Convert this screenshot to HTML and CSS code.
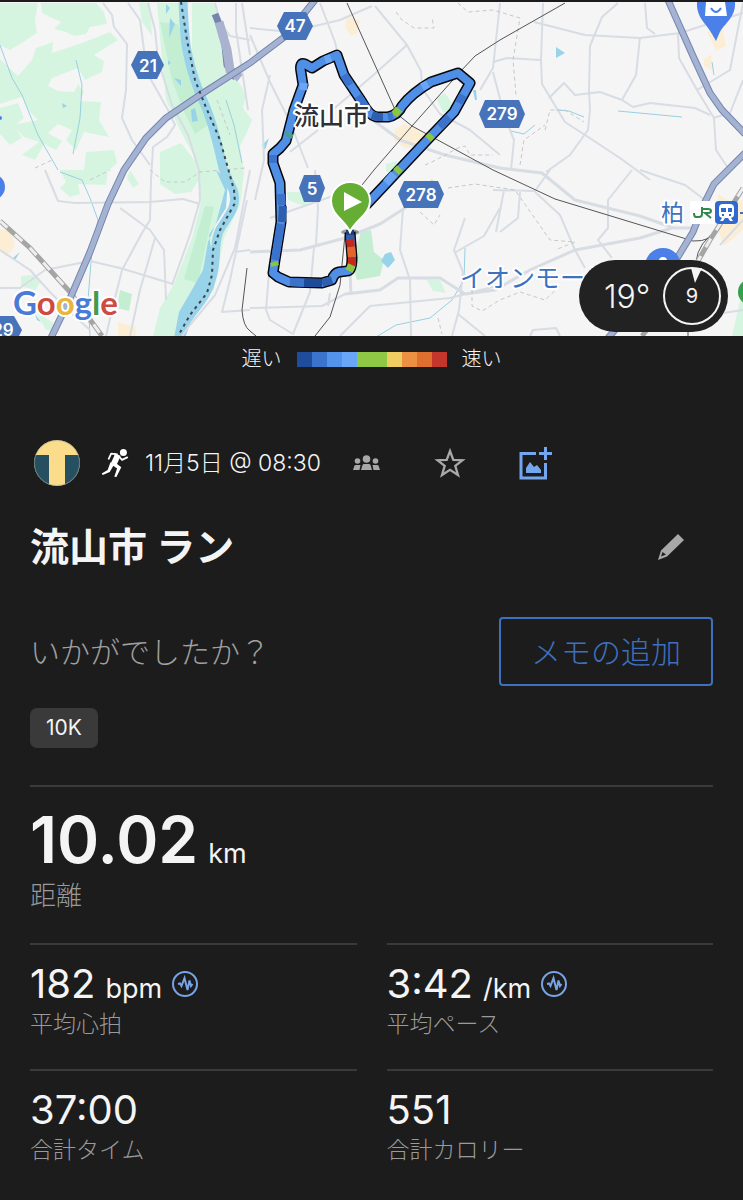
FILE: index.html
```
<!DOCTYPE html>
<html lang="ja">
<head>
<meta charset="utf-8">
<meta name="viewport" content="width=device-width, initial-scale=1">
<title>流山市 ラン</title>
<link rel="stylesheet" href="styles.css">
</head>
<body>

<div class="map">
  <svg class="map-canvas" viewBox="0 2 743 334" role="img" aria-label="流山市">
    <rect class="land" x="0" y="2" width="743" height="334"/>

    <!-- parks and fields -->
    <g class="green">
      <path d="M0 3H38L35 20 37 33 22 43 10 50 0 45Z"/>
      <path d="M41 3H96L104 12 107 24 90 27 86 34 74 36 66 32 54 29 61 22 50 17 42 13Z"/>
      <path d="M82 43L110 32 118 40 94 55 104 61 102 72 85 80 78 68 52 78 48 86 58 91 74 92 78 84 84 92 80 101 101 102 99 120 109 137 84 132 76 150 66 140 72 130 58 124 48 133 62 141 56 150 44 144 35 160 22 155 39 142 24 137 12 125 38 120 30 112 22 97 0 104V59L18 76 32 60 36 48 53 42 52 53Z"/>
      <path d="M0 108L18 103 24 118 14 126 22 138 10 145 0 134Z"/>
      <path d="M86 152L114 150 117 163 109 170H84Z"/>
      <path d="M139 3H150L152 36 142 22Z"/>
      <path d="M157 3H182L196 90 212 126 222 165 226 190 214 230 206 280 180 320 177 336H153L160 308 174 284 192 238 201 202 196 160 180 130 166 100 162 60Z"/>
      <path d="M192 3H214L220 22 228 50 233 75 240 84 246 96 243 108 252 120 247 132 240 146 244 172 240 205 224 238 214 290 206 298 216 250 235 203 229 172 212 120 192 60Z"/>
      <path d="M160 152L181 143 196 162 200 178 191 192 175 194 160 184Z"/>
      <path d="M60 170H90L108 170 106 185 78 184 80 194 70 197 60 188 66 182Z"/>
      <path d="M130 170L139 184 133 188 127 178Z"/>
      <path d="M21 276L36 275 40 283 35 290 21 286Z"/>
      <path d="M36 312L52 322 60 332 46 330Z"/>
      <path d="M436 98L445 93 452 103 450 113 443 112Z"/>
      <path d="M386 164L397 161 399 171 386 172Z"/>
      <path d="M287 192L301 192 312 204 304 206 288 200Z"/>
      <path d="M426 279L440 280 446 293 433 291Z"/>
      <path d="M740 300L743 290V336H732Z"/>
    </g>
    <g class="green-deep">
      <path d="M160 22L178 24 189 60 208 125 195 134 184 112 172 80Z"/>
      <path d="M205 206L214 207 198 283 184 279Z"/>
      <path d="M120 290L132 294 129 311 117 308Z"/>
      <path d="M361 232L371 230 374 252 384 260 380 276 357 280 352 262Z"/>
    </g>
    <g class="town">
      <path d="M347 17L360 20 357 33 351 36 345 27Z"/>
      <path d="M395 129L404 124 420 130 428 138 418 147 405 148 394 140Z"/>
      <path d="M0 230L10 230 15 246 6 257 0 250Z"/>
      <path d="M118 322L136 327V336H118Z"/>
      <path d="M707 32L723 30 726 46 716 51Z"/>
      <path d="M704 60L711 54 712 70 704 66Z"/>
      <path d="M718 194L731 202 743 200V230L724 246 718 230Z"/>
    </g>

    <!-- river and ponds -->
    <path class="river" d="M183 2C184 20 184 40 188 55 192 75 198 90 204 103 212 120 218 145 223 168L233 190C238 205 230 214 222 226 212 240 218 262 212 277 208 296 196 306 187 320L180 338"/>
    <path class="water" d="M216 170L225 190 216 223 208 242 203 270 193 288 179 312 174 338 190 320 206 298 213 260 209 235 226 208 228 180Z"/>
    <path class="water" d="M62 103L67 106 63 108ZM174 78L181 80 181 86ZM168 60L171 63 168 65ZM191 110L195 108 198 121 192 122ZM166 4L170 8 166 14ZM170 18L175 24 169 38ZM381 261L385 254 391 252 395 260 388 268ZM556 47L565 53 556 58ZM262 145L269 138 265 150ZM473 90L476 90 477 100 475 100ZM13 258L20 252 15 260ZM35 314L41 322 37 320Z"/>
    <path class="stream" d="M0 45L12 78 22 95 38 135 58 170M60 172L82 180 90 198 98 220 92 250 88 300 90 336M76 60L82 85 80 118 73 154M465 248L464 280 452 300 430 318 396 325 376 337M511 131L524 134 535 125M556 110L569 111 584 117M618 111L682 117M712 62L714 75M226 100L234 125 242 163"/>

    <!-- minor streets -->
    <g class="road">
      <path d="M103 3L112 15 114 27 127 44 126 90 122 118 132 140 150 165"/>
      <path d="M128 3L140 20 144 50 150 78 168 110 175 125 167 137 153 147 151 180 150 220 142 233 122 270 112 310 106 336"/>
      <path d="M148 3L155 30 158 60 172 105 188 135 199 170 200 200 190 235 172 285"/>
      <path d="M45 170L58 201 75 203 150 202 183 199 200 204"/>
      <path d="M120 208L150 230 164 250 166 300M155 238L140 290 130 336M45 270L90 261 120 268 173 284"/>
      <path d="M0 250L30 270 50 292 70 312 90 330M0 288H20L45 270"/>
      <path d="M250 170L235 248 215 295 190 325 182 336M250 250L235 252M250 310L222 312 230 280 247 200"/>
      <path d="M215 3L220 22 230 36 250 40M236 3V30L248 110M242 3L250 55"/>
      <path d="M250 28L290 32 340 20 372 6M250 35L270 82 290 122 308 168M270 75L262 110 264 160 255 200M320 3L335 42 345 85"/>
      <path d="M375 6L407 45 421 71 422 88 440 114 470 130 500 155M407 45L370 78 330 112M290 152L318 130"/>
      <path d="M500 3L493 68 480 90"/>
      <path d="M315 170L318 208 316 245M314 247L310 292 293 334 270 320 266 310 270 260 278 240"/>
      <path d="M250 308L322 306 345 294"/>
      <path d="M330 293L328 306M270 218L350 190"/>
      <path d="M340 336L370 306 450 298 500 285M403 208L400 250 410 280 411 336"/>
      <path d="M465 218L454 250 463 272 459 310 452 336M458 314L485 336M500 208L484 236 456 252"/>
      <path d="M493 62L507 58 540 60M534 22L585 35 640 38 680 33 743 13M543 3L541 60 542 84 565 122 585 135 620 158 650 180"/>
      <path d="M618 3L602 17 590 46 589 90 590 110 588 130 570 155 546 172M640 37L636 75 622 100M549 98L564 83 575 95 600 92 622 100 633 107 650 103 695 108 710 115"/>
      <path d="M645 3L647 28 655 34M678 33L679 58 697 90 714 118 716 150 728 168M697 90L730 70 743 3M713 118L730 113 743 80"/>
      <path d="M493 72L505 118 514 140 511 170M535 192L560 215 575 250 585 268M493 190L535 191 550 170M504 190L496 232M520 192L518 218 500 232"/>
      <path d="M632 170L608 200 608 228 598 240 612 258M640 170L685 185 705 200M743 220L720 245M530 336L533 330 556 328 560 336M743 310L710 315"/>
    </g>
    <g class="road wide">
      <path d="M250 252L300 250 345 238 380 224 405 208 433 180"/>
      <path d="M350 270L351 295M345 294L380 290 398 278 440 278 465 294 495 290 530 270 575 250 640 238 672 228"/>
      <path d="M370 118L400 140 445 155 500 168 542 173 575 200 640 216 674 228 695 228"/>
    </g>
    <g class="trail">
      <path d="M396 12L402 20 414 28 434 28 432 18M458 3L468 12 493 10 520 18 513 60 516 95M425 165L432 162 458 148 465 146 470 155 493 155M448 188L475 184 515 190 550 240 575 242 555 250M420 212L434 225 440 215M472 290V306L482 311 500 300 520 292 545 300 560 286M438 318L442 334M545 130L550 110 565 110 584 122M520 165L524 140 545 125"/>
      <path d="M90 180L110 170M150 170L165 182 185 182 200 172 245 168M35 168L52 160M217 100L230 135"/>
    </g>

    <!-- railways -->
    <path class="rail-thin" d="M347 3L397 114 412 126 493 170 555 199 693 241Q711 242 720 228M412 126L374 170 362 185M345 235L340 285 330 317 315 336M412 126L460 72 475 56 500 40 565 3M247 268L242 310Q243 326 250 331L256 336M718 230Q698 242 696 262M688 332V336"/>
    <path class="rail" d="M0 221L30 248 70 292 102 336M743 188L710 240 690 275 642 336"/>
    <path class="rail-dash" d="M0 221L30 248 70 292 102 336M743 188L710 240 690 275 642 336"/>

    <!-- trunk roads -->
    <path class="trunk-edge" d="M215 14L224 36 227 65 236 78"/>
    <path class="trunk-wide" d="M219 22L227 50 230 70 240 78"/>
    <g class="trunk-edge">
      <path d="M315 0L287 35 250 63 200 95 166 118 146 138 124 170 108 204 90 252 72 294 50 340"/>
      <path d="M668 0L693 56 710 93 722 110 745 134M745 153L714 184 704 204 693 232 676 260 608 338"/>
    </g>
    <g class="trunk">
      <path d="M315 0L287 35 250 63 200 95 166 118 146 138 124 170 108 204 90 252 72 294 50 340"/>
      <path d="M668 0L693 56 710 93 722 110 745 134M745 153L714 184 704 204 693 232 676 260 608 338"/>
    </g>
    <path class="border-dash" d="M181 2L187 40 195 80 205 105 220 140 229 172 234 190 235 203 220 230 213 250 212 275 207 293 190 315 178 336"/>

    <!-- route -->
    <path class="route-edge" d="M350 232L352 258Q352 271 347 271L339 272Q334 273 332 280L322 283 289 282 278 277 273 273 275 260 281 222 280 183 273 163 273 154 280 148 286 141 294 110 303 85 301 72Q299 62 305 64L312 68 323 61 337 55 344 75 362 102Q370 117 378 117L388 117Q398 115 402 106 412 93 431 82L458 73 470 83 454 112 430 137 366 205"/>
    <path class="route" d="M350 232L352 258Q352 271 347 271L339 272Q334 273 332 280L322 283 289 282 278 277 273 273 275 260 281 222 280 183 273 163 273 154 280 148 286 141 294 110 303 85 301 72Q299 62 305 64L312 68 323 61 337 55 344 75 362 102Q370 117 378 117L388 117Q398 115 402 106 412 93 431 82L458 73 470 83 454 112 430 137 366 205"/>
    <g class="part">
      <path stroke="#2d5fae" d="M350 230V239M332 280L322 283M282 222L283 206M372 115L378 117 383 117"/>
      <path stroke="#c4291d" d="M350 239L351 247M352 257V266"/>
      <path stroke="#e2662b" d="M351 247L352 257"/>
      <path stroke="#8cc63f" d="M352 265L349 271M275 266L274 262M394 115L399 109M428 139L432 135M396 172L400 168"/>
      <path stroke="#1e4a9a" d="M322 283L304 283"/>
      <path stroke="#3a72cc" d="M304 283L290 282M275 260L281 224M273 163L273 155M344 75L350 85M358 96L369 112M388 117L393 116M463 95L459 103M449 117L440 127M282 205L281 194"/>
      <path stroke="#6aa6f5" d="M422 87L428 84M394 174L386 183M303 90L304 83M325 60L331 58"/>
      <path stroke="#46a08c" d="M288 137L290 133"/>
    </g>

    <!-- road numbers -->
    <g class="shield">
      <path d="M138 51H157L164 65 157 79H138L131 65Z"/>
      <path d="M284 12H306L313 26 306 40H284L277 26Z"/>
      <path d="M485 100H519L525 114 519 128H485L479 114Z"/>
      <path d="M304 175H320L325 188 320 202H304L299 188Z"/>
      <path d="M404 181H438L444 194 438 208H404L398 194Z"/>
      <path d="M-4 316H14L22 330 16 342H-4Z"/>
    </g>
    <g class="shield-text">
      <text x="148" y="72">21</text>
      <text x="295" y="32">47</text>
      <text x="502" y="120">279</text>
      <text x="312" y="195">5</text>
      <text x="421" y="201">278</text>
      <text x="3" y="336">29</text>
    </g>

    <!-- places -->
    <circle class="poi" cx="-8" cy="187" r="13"/>
    <circle class="poi" cx="0" cy="118" r="2"/>
    <path class="poi" d="M697 2C696 18 707 24 712 34L716 41 719 34C724 23 736 18 735 2Z"/>
    <path fill="#fff" d="M706 2H725L727 16H705Z"/>
    <path class="poi-smile" d="M711 8Q716 16 721 8"/>
    <circle class="poi" cx="663" cy="266" r="18"/>
    <circle cx="663" cy="261" r="4" fill="#fff"/>
    <circle cx="751" cy="292" r="13" fill="#34a04a"/>
    <text class="city" x="294" y="125">流山市</text>
    <text class="place" x="460" y="287">イオンモール</text>
    <text class="place small" x="661" y="221">柏</text>
    <rect x="690" y="201" width="25" height="23" rx="2" fill="#fff"/>
    <path class="jr" d="M702 207V214Q702 217 699 217H696Q694 217 694 213M702 209H708Q711 209 711 211 711 213 708 213H705L711 218"/>
    <rect class="station" x="715" y="201" width="23" height="23" rx="4"/>
    <path fill="#fff" fill-rule="evenodd" d="M723 204H730Q734 204 734 208V215Q734 217 731 218L733 221H730L728 218H725L723 221H720L722 218Q719 217 719 215V208Q719 204 723 204ZM721 208V212H726V208ZM728 208V212H732V208ZM722 214V216H724V214ZM729 214V216H731V214Z"/>
    <path class="place-dash" d="M740 213H743"/>

    <!-- start pin -->
    <ellipse cx="350" cy="232" rx="9" ry="3" fill="#000" opacity=".35"/>
    <path class="pin" d="M350 232C345 220 331 215 331 201C331 190 340 182 350 182C361 182 370 190 370 201C370 215 355 220 350 232Z"/>
    <path fill="#fff" d="M344 192L362 202 344 211Z"/>

    <text class="google" x="13" y="315"><tspan fill="#4b7bd8">G</tspan><tspan fill="#cf4a3f">o</tspan><tspan fill="#e8b63c">o</tspan><tspan fill="#4b7bd8">g</tspan><tspan fill="#46984f">l</tspan><tspan fill="#cf4a3f">e</tspan></text>
  </svg>

  <div class="weather">
    <span class="temp">19°</span>
    <span class="wind">
      <svg viewBox="0 0 60 60" aria-hidden="true"><circle cx="30" cy="30" r="28" fill="none" stroke="#f4f4f4" stroke-width="2"/><path d="M29 2H40L33 17Z" fill="#f4f4f4"/></svg>
      <span class="wind-speed">9</span>
    </span>
  </div>
</div>

<div class="legend">
  <span>遅い</span>
  <div class="scale">
    <i class="s1"></i><i class="s2"></i><i class="s3"></i><i class="s4"></i><i class="s5"></i><i class="s5"></i><i class="s6"></i><i class="s7"></i><i class="s8"></i><i class="s9"></i>
  </div>
  <span>速い</span>
</div>

<main class="activity">
  <div class="meta">
    <svg class="avatar" viewBox="0 0 46 46" aria-hidden="true">
      <clipPath id="round"><circle cx="23" cy="23" r="23"/></clipPath>
      <g clip-path="url(#round)"><rect width="46" height="46" fill="#fadc8a"/><path d="M0 15H15V46H0ZM31 15H46V46H31Z" fill="#264f60"/></g>
      <circle cx="23" cy="23" r="22.500" fill="none" stroke="#9aa59a" stroke-width=".5"/>
    </svg>
    <svg class="runner" viewBox="0 0 80 84" aria-hidden="true">
      <circle cx="64" cy="12" r="10" fill="#fff"/>
      <path d="M38 13L56 22 45 46 28 43 38 21Z" fill="#fff"/>
      <path d="M22 30L29 15 46 17M50 22L60 33 75 26" fill="none" stroke="#fff" stroke-width="5" stroke-linecap="round" stroke-linejoin="round"/>
      <path d="M27 40L37 47 25 68 5 76 2 72 19 62ZM32 42L45 44 58 54 44 82 38 81 46 58 34 49Z" fill="#fff"/>
    </svg>
    <time class="date" datetime="11-05T08:30">11月5日 @ 08:30</time>
    <svg class="people" viewBox="0 0 27 16" aria-hidden="true">
      <g fill="#a8a8a8"><circle cx="13.500" cy="4" r="3.800"/><circle cx="4.500" cy="6" r="2.800"/><circle cx="22.500" cy="6" r="2.800"/><path d="M8 15L9.500 10Q10 9 11 9H16Q17 9 17.500 10L19 15ZM0 15L1.500 10.500Q2 10 3 10H7.500L6.500 15ZM27 15L25.500 10.500Q25 10 24 10H19.500L20.500 15Z"/></g>
    </svg>
    <button type="button" class="icon-btn star" aria-label="お気に入り">
      <svg viewBox="0 0 32 32"><path d="M16 4L19.300 12.800 28.500 13.200 21.300 18.900 24 28 16 22.800 8 28 10.700 18.900 3.500 13.200 12.700 12.800Z" fill="none" stroke="#a8a8a8" stroke-width="2.300"/></svg>
    </button>
    <button type="button" class="icon-btn add-photo" aria-label="写真を追加">
      <svg viewBox="0 0 33 33"><g fill="none" stroke="#73a6ee" stroke-width="3"><path d="M17 6.500H2V31H26.500V16M26.500 0V13M20 6.500H33"/></g><path d="M7 26V21L11 15 15 20 18 18 22 23V26Z" fill="#73a6ee"/></svg>
    </button>
  </div>

  <div class="title-row">
    <h1>流山市 ラン</h1>
    <button type="button" class="icon-btn edit" aria-label="編集">
      <svg viewBox="0 0 26 26"><path fill="#a8a8a8" fill-rule="evenodd" d="M20 0L26 6 9 22.500 0 26 3 16.500ZM4.500 18L3 22.500 8 20.500Z"/></svg>
    </button>
  </div>

  <div class="note">
    <p>いかがでしたか？</p>
    <button type="button" class="note-btn">メモの追加</button>
  </div>

  <span class="tag">10K</span>

  <section class="distance">
    <div class="big">10.02 <small>km</small></div>
    <div class="big-label">距離</div>
  </section>

  <section class="stats">
    <div class="stat">
      <div class="value">182 <small>bpm</small>
        <svg class="pulse" viewBox="0 0 26 26" aria-hidden="true"><circle cx="13" cy="13" r="12"/><path d="M6 13L8 12.500 9.500 15 12.500 7 15.500 19 17.500 9.500 19 15 20.500 13"/></svg>
      </div>
      <div class="label">平均心拍</div>
    </div>
    <div class="stat">
      <div class="value">3:42 <small>/km</small>
        <svg class="pulse" viewBox="0 0 26 26" aria-hidden="true"><circle cx="13" cy="13" r="12"/><path d="M6 13L8 12.500 9.500 15 12.500 7 15.500 19 17.500 9.500 19 15 20.500 13"/></svg>
      </div>
      <div class="label">平均ペース</div>
    </div>
    <div class="stat">
      <div class="value">37:00</div>
      <div class="label">合計タイム</div>
    </div>
    <div class="stat">
      <div class="value">551</div>
      <div class="label">合計カロリー</div>
    </div>
  </section>
</main>

</body>
</html>
```
FILE: styles.css
```
* {
  box-sizing: border-box;
}
body {
  margin: 0;
  background: #1c1c1c;
  color: #f4f4f4;
  font-family: Inter, "Noto Sans CJK JP", sans-serif;
  font-weight: 400;
}
button {
  font-family: inherit;
  cursor: pointer;
}
svg {
  display: block;
}

/* map */
.map {
  position: relative;
  padding-top: 2px;
}
.map-canvas {
  width: 100%;
  height: auto;
}
.land { fill: #f5f5f6; }
.green { fill: #d6f5e1; }
.green-deep { fill: #c4eed2; }
.town { fill: #fbeed5; }
.water { fill: #98d3ea; }
.river {
  fill: none;
  stroke: #98d3ea;
  stroke-width: 9;
}
.stream {
  fill: none;
  stroke: #98d0e0;
  stroke-width: 1;
}
.road {
  fill: none;
  stroke: #d8dce3;
  stroke-width: 2;
  stroke-linejoin: round;
}
.wide {
  stroke-width: 3;
}
.trail {
  fill: none;
  stroke: #c6c8cb;
  stroke-width: 1;
  stroke-dasharray: 4 3;
}
.rail-thin {
  fill: none;
  stroke: #555;
  stroke-width: 1;
}
.rail {
  fill: none;
  stroke: #a5a5a5;
  stroke-width: 5;
}
.rail-dash {
  fill: none;
  stroke: #eee;
  stroke-width: 3;
  stroke-dasharray: 10 10;
}
.trunk-edge {
  fill: none;
  stroke: #7585ae;
  stroke-width: 7;
}
.trunk {
  fill: none;
  stroke: #a5b3d3;
  stroke-width: 5;
}
.trunk-wide {
  fill: none;
  stroke: #a9b3cf;
  stroke-width: 9;
}
.border-dash {
  fill: none;
  stroke: #3b4650;
  stroke-width: 2;
  stroke-dasharray: 3 4;
}
.route-edge,
.route,
.part {
  fill: none;
  stroke-linejoin: round;
}
.route-edge {
  stroke: #05070c;
  stroke-width: 11;
}
.route {
  stroke: #4f8fe6;
  stroke-width: 8;
}
.part {
  stroke-width: 8;
}
.shield { fill: #4673b9; }
.shield-text {
  fill: #fff;
  font-size: 17px;
  font-weight: 600;
  text-anchor: middle;
}
.poi { fill: #4a80e8; }
.poi-smile {
  fill: none;
  stroke: #4a80e8;
  stroke-width: 2;
}
.city,
.place,
.google {
  stroke: #fff;
  stroke-width: 4;
  stroke-linejoin: round;
  paint-order: stroke;
}
.city {
  fill: #2e3036;
  font-size: 25px;
  font-weight: 500;
}
.place {
  fill: #3d72bf;
  font-size: 25px;
}
.place.small {
  font-size: 23px;
}
.place-dash {
  stroke: #3d72bf;
  stroke-width: 2;
}
.jr {
  fill: none;
  stroke: #2f8a4a;
  stroke-width: 2;
}
.station { fill: #2f6ad0; }
.pin {
  fill: #66ad33;
  stroke: #fff;
  stroke-width: 2;
}
.google {
  font-family: Lato, sans-serif;
  font-size: 33px;
  font-weight: 700;
}

.weather {
  position: absolute;
  right: 15px;
  bottom: 4px;
  display: flex;
  align-items: center;
  justify-content: space-between;
  width: 149px;
  height: 72px;
  padding: 0 6px 0 25px;
  border-radius: 36px;
  background: #222;
}
.temp {
  font-size: 32px;
  font-weight: 300;
}
.wind {
  display: grid;
  place-items: center;
  width: 60px;
  height: 60px;
}
.wind svg,
.wind-speed {
  grid-area: 1 / 1;
}
.wind-speed {
  font-size: 20px;
}

/* pace legend */
.legend {
  display: flex;
  justify-content: center;
  align-items: center;
  gap: 15px;
  height: 46px;
  font-size: 20px;
  font-weight: 300;
  line-height: 28px;
}
.scale {
  display: flex;
}
.scale i {
  width: 15px;
  height: 15px;
}
.s1 { background: #1f4c9b; }
.s2 { background: #3b74cc; }
.s3 { background: #5394ea; }
.s4 { background: #68a7f7; }
.s5 { background: #8fc844; }
.s6 { background: #f1cc62; }
.s7 { background: #ec9142; }
.s8 { background: #df6f2e; }
.s9 { background: #c4362c; }

/* activity */
.activity {
  padding: 56px 30px 32px;
}
.meta {
  display: flex;
  align-items: center;
  height: 50px;
  padding-left: 4px;
}
.avatar {
  width: 46px;
  height: 46px;
}
.runner {
  width: 28px;
  height: 30px;
  margin: 0 16px 0 21px;
}
.date {
  font-size: 23px;
  font-weight: 300;
  line-height: 28px;
}
.people {
  width: 27px;
  height: 16px;
  margin-left: 32px;
}
.icon-btn {
  padding: 0;
  border: 0;
  background: none;
}
.star {
  margin-left: 54px;
}
.star svg {
  width: 32px;
  height: 32px;
}
.add-photo {
  margin-left: 53px;
}
.add-photo svg {
  width: 33px;
  height: 33px;
}
.title-row {
  display: flex;
  align-items: center;
  justify-content: space-between;
  height: 56px;
  margin-top: 31px;
  padding-right: 29px;
}
h1 {
  margin: 0;
  font-size: 39px;
  font-weight: 700;
  line-height: 56px;
}
.edit svg {
  width: 26px;
  height: 26px;
}
.note {
  display: flex;
  align-items: center;
  justify-content: space-between;
  margin-top: 42px;
}
.note p {
  margin: 0;
  color: #a0a0a0;
  font-size: 30px;
  font-weight: 300;
  line-height: 40px;
}
.note-btn {
  height: 69px;
  padding: 0 30px 4px;
  border: 2px solid #3f70bd;
  border-radius: 4px;
  background: none;
  color: #3f70bd;
  font-size: 30px;
  font-weight: 300;
}
.tag {
  display: block;
  width: fit-content;
  margin-top: 22px;
  padding: 0 16px;
  border-radius: 7px;
  background: #3a3a3a;
  font-size: 21px;
  line-height: 40px;
}
.distance {
  margin-top: 37px;
  padding-top: 18px;
  border-top: 2px solid #3a3a3a;
}
.big {
  display: flex;
  align-items: baseline;
  gap: 10px;
  font-size: 64px;
  font-weight: 600;
  line-height: 70px;
}
.value small,
.big small {
  font-size: 27px;
  font-weight: 400;
  line-height: 28px;
}
.big-label {
  color: #9a9a9a;
  font-size: 26px;
  font-weight: 300;
  line-height: 42px;
}
.stats {
  display: grid;
  grid-template-columns: 1fr 1fr;
  gap: 30px;
  margin-top: 26px;
}
.stat {
  height: 96px;
  padding-top: 16px;
  border-top: 2px solid #3a3a3a;
}
.value {
  display: flex;
  align-items: baseline;
  gap: 10px;
  font-size: 40px;
  line-height: 46px;
}
.pulse {
  align-self: center;
  width: 26px;
  height: 26px;
  fill: none;
  stroke: #78a4e6;
  stroke-width: 2;
}
.label {
  color: #9a9a9a;
  font-size: 23px;
  font-weight: 300;
  line-height: 34px;
}
```
